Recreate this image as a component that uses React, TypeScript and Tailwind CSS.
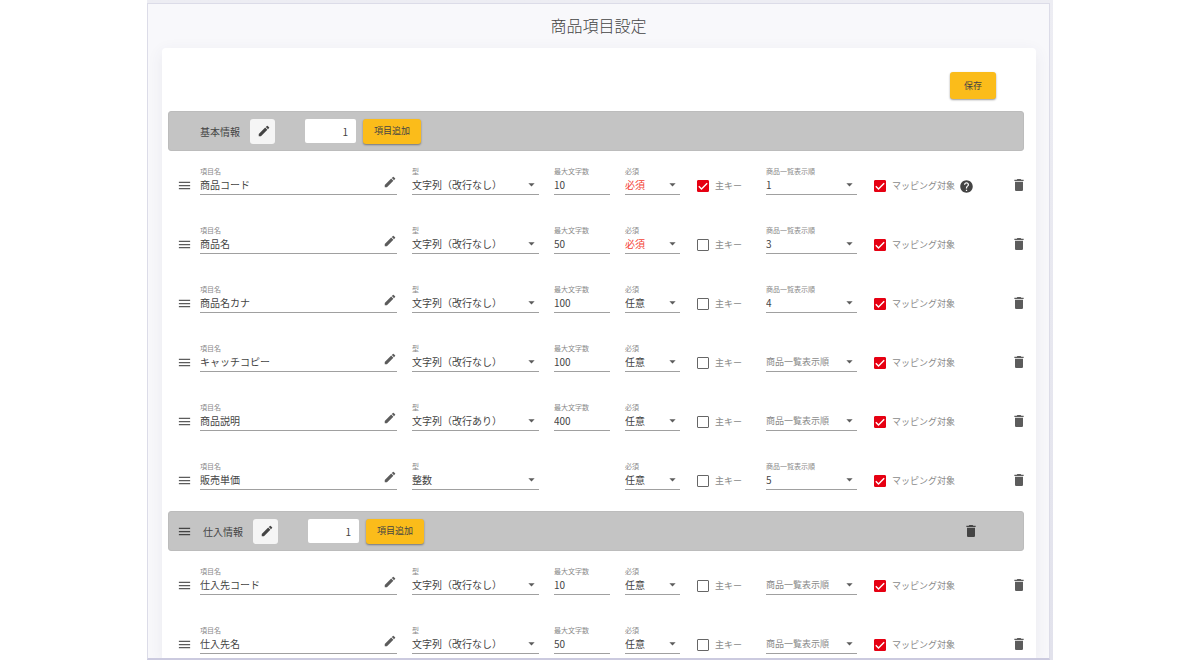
import { MdArrowDropDown, MdDelete, MdEdit, MdHelp, MdMenu } from "react-icons/md";

type Item = {
    name: string;
    type: string;
    max?: string;
    required: boolean;
    primary?: boolean;
    order?: string;
    help?: boolean;
};

type Section = {
    title: string;
    fixed?: boolean;
    items: Item[];
};

const LINE = "文字列（改行なし）";
const MULTI = "文字列（改行あり）";

const sections: Section[] = [
    {
        title: "基本情報",
        fixed: true,
        items: [
            { name: "商品コード", type: LINE, max: "10", required: true, primary: true, order: "1", help: true },
            { name: "商品名", type: LINE, max: "50", required: true, order: "3" },
            { name: "商品名カナ", type: LINE, max: "100", required: false, order: "4" },
            { name: "キャッチコピー", type: LINE, max: "100", required: false },
            { name: "商品説明", type: MULTI, max: "400", required: false },
            { name: "販売単価", type: "整数", required: false, order: "5" },
        ],
    },
    {
        title: "仕入情報",
        items: [
            { name: "仕入先コード", type: LINE, max: "10", required: false },
            { name: "仕入先名", type: LINE, max: "50", required: false },
        ],
    },
];

const control = "block h-[18px] w-full min-w-0 appearance-none rounded-none border-b border-[#a0a0a0] bg-transparent pb-[2px] leading-[15px] outline-none";

function TextField({ label, value, edit }: { label: string; value: string; edit?: boolean }) {
    return (
        <label className="relative block min-w-0 self-start">
            <span className="block h-[10px] text-[7px] leading-[8px] text-[#8a8a8a]">{label}</span>
            <input type="text" defaultValue={value} className={`${control} text-[10px] text-[#444]`} />
            {edit && <MdEdit size={14} className="absolute right-0 bottom-[6px] text-[#5c5c5c]" />}
        </label>
    );
}

function SelectField({ label, value, options, red }: { label: string; value?: string; options: string[]; red?: boolean }) {
    const color = red ? "text-[10px] text-[#f44336]" : value ? "text-[10px] text-[#444]" : "text-[9px] text-[#8a8a8a]";
    return (
        <label className="relative block min-w-0 self-start">
            <span className="block h-[10px] text-[7px] leading-[8px] text-[#8a8a8a]">{value ? label : ""}</span>
            <select defaultValue={value ?? ""} aria-label={label} className={`${control} ${color}`}>
                {!value && <option value="">{label}</option>}
                {options.map((o) => (
                    <option key={o} value={o}>{o}</option>
                ))}
            </select>
            <MdArrowDropDown size={15} className="pointer-events-none absolute right-0 bottom-[3px] text-[#5c5c5c]" />
        </label>
    );
}

function Check({ label, checked }: { label: string; checked?: boolean }) {
    return (
        <label className="flex items-center gap-[6px] text-[9px] whitespace-nowrap text-[#8a8a8a]">
            <span className="relative block size-3">
                <input
                    type="checkbox"
                    defaultChecked={checked}
                    className="peer block size-3 appearance-none rounded-[1px] border border-[#666] checked:border-[#e60012] checked:bg-[#e60012]"
                />
                <svg viewBox="0 0 12 12" className="pointer-events-none absolute inset-0 hidden size-3 peer-checked:block">
                    <path d="M1.8 6.2 4.5 8.9 10.2 3.2" fill="none" stroke="#fff" strokeWidth="1.4" />
                </svg>
            </span>
            {label}
        </label>
    );
}

function ItemRow({ item }: { item: Item }) {
    return (
        <li className="flex h-[59px] pt-4">
            <button type="button" aria-label="並べ替え" className="flex h-[37px] w-8 items-center justify-center text-[#5c5c5c]">
                <MdMenu size={15} />
            </button>
            <div className="grid min-w-0 flex-1 grid-cols-[197fr_127fr_56fr_55fr_56fr_91fr_126fr] gap-[15px]">
                <TextField label="項目名" value={item.name} edit />
                <SelectField label="型" value={item.type} options={[LINE, MULTI, "整数"]} />
                {item.max ? <TextField label="最大文字数" value={item.max} /> : <span />}
                <SelectField label="必須" value={item.required ? "必須" : "任意"} options={["必須", "任意"]} red={item.required} />
                <div className="flex h-[38px] items-center pl-[2px]">
                    <Check label="主キー" checked={item.primary} />
                </div>
                <SelectField label="商品一覧表示順" value={item.order} options={["1", "2", "3", "4", "5"]} />
                <div className="flex h-[38px] items-center gap-1 pl-[2px]">
                    <Check label="マッピング対象" checked />
                    {item.help && <MdHelp size={15} className="shrink-0 text-[#444]" />}
                </div>
            </div>
            <button type="button" aria-label="項目を削除" className="ml-[15px] flex h-9 w-[11px] items-center justify-center text-[#5c5c5c]">
                <MdDelete size={16} className="shrink-0" />
            </button>
        </li>
    );
}

function SectionHeader({ section }: { section: Section }) {
    return (
        <div className="flex h-10 items-center rounded-[3px] border border-[#bcbcbc] bg-[#c4c4c4] text-[10px] text-[#444]">
            {section.fixed ? (
                <span className="w-[31px]" />
            ) : (
                <button type="button" aria-label="並べ替え" className="mr-[3px] flex w-[31px] items-center justify-center">
                    <MdMenu size={15} />
                </button>
            )}
            <h2>{section.title}</h2>
            <button type="button" aria-label="名称を編集" className="ml-[10px] flex size-[25px] items-center justify-center rounded-[3px] bg-[#f5f5f5] pl-[2px]">
                <MdEdit size={14} />
            </button>
            <input
                type="text"
                aria-label="追加する項目数"
                defaultValue="1"
                className="ml-[30px] h-6 w-[51px] rounded-[2px] bg-white pr-2 text-right outline-none"
            />
            <button type="button" className="ml-[7px] h-[25px] w-[58px] rounded-[3px] bg-[#fbbc1a] text-[9px] shadow-[0_1px_2px_rgba(0,0,0,0.4)]">
                項目追加
            </button>
            {!section.fixed && (
                <button type="button" aria-label="セクションを削除" className="mr-11 ml-auto">
                    <MdDelete size={16} />
                </button>
            )}
        </div>
    );
}

export default function App() {
    return (
        <div className="h-screen bg-white font-['Noto_Sans_CJK_JP',sans-serif]" lang="ja">
            <div className="mx-auto h-full max-w-[906px] bg-linear-to-b from-[#ededf3] to-[#e2e2ec] pt-[3px] pr-[3px]">
                <main className="flex h-full flex-col overflow-hidden border-t border-r border-b-2 border-l border-[#dcdce8] border-b-[#cbcadf] bg-[#f8f8fb]">
                    <h1 className="flex h-11 shrink-0 items-center justify-center pb-[2px] text-[16px] font-light text-[#444]">商品項目設定</h1>
                    <div className="mr-[13px] ml-[14px] min-h-0 flex-1 rounded-t-[4px] bg-white pr-3 pl-[6px] shadow-[0_4px_16px_rgba(60,60,100,0.08)]">
                        <div className="flex justify-end pt-6 pr-7 pb-3">
                            <button type="button" className="h-[27px] w-[46px] rounded-[3px] bg-[#fbbc1a] text-[9px] text-[#444] shadow-[0_1px_2px_rgba(0,0,0,0.4)]">
                                保存
                            </button>
                        </div>
                        {sections.map((section) => (
                            <section key={section.title} className="mb-[6px]">
                                <SectionHeader section={section} />
                                <ul>
                                    {section.items.map((item) => (
                                        <ItemRow key={item.name} item={item} />
                                    ))}
                                </ul>
                            </section>
                        ))}
                    </div>
                </main>
            </div>
        </div>
    );
}
